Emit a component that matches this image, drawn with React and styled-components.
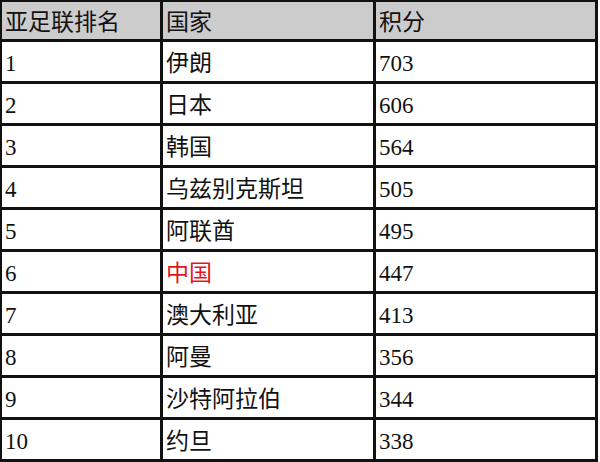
import React from "react";
import styled, { createGlobalStyle } from "styled-components";

const GlobalStyle = createGlobalStyle`
  html, body {
    margin: 0;
    padding: 0;
    background: #ffffff;
  }
  body {
    font-family: "Liberation Serif", "Noto Sans CJK SC", serif;
  }
`;

const Table = styled.table`
  width: 598px;
  table-layout: fixed;
  border-collapse: separate;
  border-spacing: 0;
  border-top: 2px solid #111;
  border-left: 2px solid #111;
  font-size: 23px;
  color: #111;
`;

const Col = styled.col`
  width: ${(p) => p.$w}px;
`;

const Row = styled.tr`
  height: ${(p) => (p.$head ? 40 : 42)}px;
  background: ${(p) => (p.$head ? "#cccccc" : "#ffffff")};
`;

const Cell = styled.td`
  box-sizing: border-box;
  padding: 3px 0 0 3px;
  border-right: 3px solid #111;
  border-bottom: 3px solid #111;
  vertical-align: middle;
  text-align: left;
  font-weight: normal;
  white-space: nowrap;
  line-height: 1;
  color: ${(p) => (p.$red ? "#e4141b" : "#111")};
`;

const rows = [
  ["1", "伊朗", "703"],
  ["2", "日本", "606"],
  ["3", "韩国", "564"],
  ["4", "乌兹别克斯坦", "505"],
  ["5", "阿联酋", "495"],
  ["6", "中国", "447", true],
  ["7", "澳大利亚", "413"],
  ["8", "阿曼", "356"],
  ["9", "沙特阿拉伯", "344"],
  ["10", "约旦", "338"],
];

export default function App() {
  return (
    <>
      <GlobalStyle />
      <Table>
        <colgroup>
          <Col $w={161} />
          <Col $w={213} />
          <Col $w={222} />
        </colgroup>
        <thead>
          <Row $head>
            <Cell as="th">亚足联排名</Cell>
            <Cell as="th">国家</Cell>
            <Cell as="th">积分</Cell>
          </Row>
        </thead>
        <tbody>
          {rows.map(([rank, country, points, red]) => (
            <Row key={rank}>
              <Cell>{rank}</Cell>
              <Cell $red={red}>{country}</Cell>
              <Cell>{points}</Cell>
            </Row>
          ))}
        </tbody>
      </Table>
    </>
  );
}
